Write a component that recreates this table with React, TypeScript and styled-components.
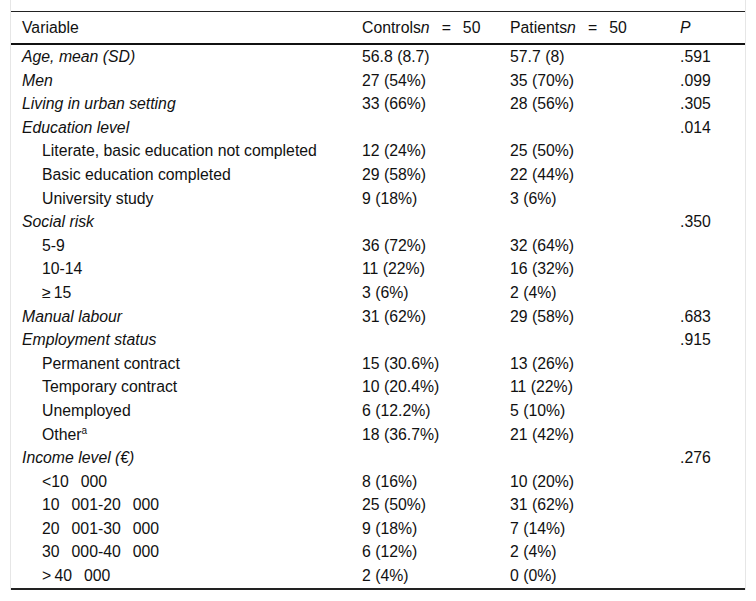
import { FC } from "react";
import styled, { createGlobalStyle } from "styled-components";

const GlobalStyle = createGlobalStyle`
  body {
    margin: 0;
    background: #fff;
    font-family: "Liberation Sans", Arial, sans-serif;
    color: #111;
  }
`;

const Frame = styled.div`
  margin: 0 10px;
  padding-top: 11px;
  border-left: 1px solid #e6e6e6;
  border-right: 1px solid #e6e6e6;
`;

const Table = styled.table`
  width: 100%;
  table-layout: fixed;
  border-collapse: collapse;
  font-size: 15.8px;
  border-top: 1px solid #222;
  border-bottom: 2px solid #222;
`;

const HeadCell = styled.th<{ $w: number }>`
  box-sizing: border-box;
  width: ${(p) => p.$w}px;
  text-align: left;
  font-weight: normal;
  padding: 7px 2px 7px 11px;
  line-height: 17px;
  border-bottom: 2px solid #111;
  white-space: nowrap;
`;

const Cell = styled.td<{ $indent?: boolean; $italic?: boolean }>`
  padding: 3px 4px 3px ${(p) => (p.$indent ? 31 : 11)}px;
  line-height: 17.6px;
  font-style: ${(p) => (p.$italic ? "italic" : "normal")};
  vertical-align: top;
  white-space: nowrap;
`;

// wide spacing used around "=" and as thousands separator
const Gap = styled.span`
  display: inline-block;
  width: 12px;
`;

const Sup = styled.sup`
  font-size: 10px;
  line-height: 0;
  vertical-align: 6px;
`;

type Row = {
  label: React.ReactNode;
  controls?: string;
  patients?: string;
  p?: string;
  sub?: boolean;
};

const Spaced: FC<{ parts: string[] }> = ({ parts }) => (
  <>
    {parts.map((s, i) => (
      <span key={i}>
        {i > 0 && <Gap> </Gap>}
        {s}
      </span>
    ))}
  </>
);

const rows: Row[] = [
  { label: "Age, mean (SD)", controls: "56.8 (8.7)", patients: "57.7 (8)", p: ".591" },
  { label: "Men", controls: "27 (54%)", patients: "35 (70%)", p: ".099" },
  { label: "Living in urban setting", controls: "33 (66%)", patients: "28 (56%)", p: ".305" },
  { label: "Education level", p: ".014" },
  { label: "Literate, basic education not completed", controls: "12 (24%)", patients: "25 (50%)", sub: true },
  { label: "Basic education completed", controls: "29 (58%)", patients: "22 (44%)", sub: true },
  { label: "University study", controls: "9 (18%)", patients: "3 (6%)", sub: true },
  { label: "Social risk", p: ".350" },
  { label: "5-9", controls: "36 (72%)", patients: "32 (64%)", sub: true },
  { label: "10-14", controls: "11 (22%)", patients: "16 (32%)", sub: true },
  { label: "\u2265\u200915", controls: "3 (6%)", patients: "2 (4%)", sub: true },
  { label: "Manual labour", controls: "31 (62%)", patients: "29 (58%)", p: ".683" },
  { label: "Employment status", p: ".915" },
  { label: "Permanent contract", controls: "15 (30.6%)", patients: "13 (26%)", sub: true },
  { label: "Temporary contract", controls: "10 (20.4%)", patients: "11 (22%)", sub: true },
  { label: "Unemployed", controls: "6 (12.2%)", patients: "5 (10%)", sub: true },
  {
    label: (
      <>
        Other<Sup>a</Sup>
      </>
    ),
    controls: "18 (36.7%)",
    patients: "21 (42%)",
    sub: true,
  },
  { label: "Income level (\u20ac)", p: ".276" },
  { label: <Spaced parts={["<10", "000"]} />, controls: "8 (16%)", patients: "10 (20%)", sub: true },
  { label: <Spaced parts={["10", "001-20", "000"]} />, controls: "25 (50%)", patients: "31 (62%)", sub: true },
  { label: <Spaced parts={["20", "001-30", "000"]} />, controls: "9 (18%)", patients: "7 (14%)", sub: true },
  { label: <Spaced parts={["30", "000-40", "000"]} />, controls: "6 (12%)", patients: "2 (4%)", sub: true },
  { label: <Spaced parts={[">\u200940", "000"]} />, controls: "2 (4%)", patients: "0 (0%)", sub: true },
];

const GroupHead: FC<{ name: string }> = ({ name }) => (
  <>
    {name}
    <i>n</i>
    <Gap> </Gap>=<Gap> </Gap>50
  </>
);

const App: FC = () => {
  return (
    <>
      <GlobalStyle />
      <Frame>
        <Table>
          <thead>
            <tr>
              <HeadCell $w={340}>Variable</HeadCell>
              <HeadCell $w={148}>
                <GroupHead name="Controls" />
              </HeadCell>
              <HeadCell $w={170}>
                <GroupHead name="Patients" />
              </HeadCell>
              <HeadCell $w={76}>
                <i>P</i>
              </HeadCell>
            </tr>
          </thead>
          <tbody>
            {rows.map((r, i) => (
              <tr key={i}>
                <Cell $indent={r.sub} $italic={!r.sub}>
                  {r.label}
                </Cell>
                <Cell>{r.controls}</Cell>
                <Cell>{r.patients}</Cell>
                <Cell>{r.p}</Cell>
              </tr>
            ))}
          </tbody>
        </Table>
      </Frame>
    </>
  );
};

export default App;
